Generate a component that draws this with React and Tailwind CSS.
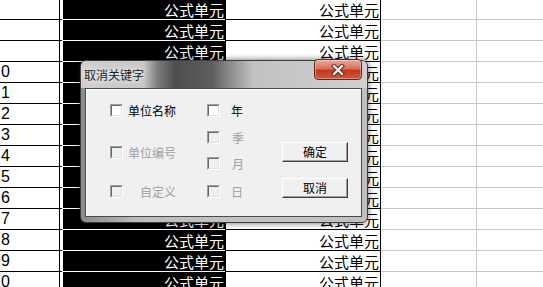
import React from "react";

const ROWS = 14;

function Checkbox({ enabled }) {
  return (
    <span className="inline-block w-[13px] h-[13px] border border-t-[#a0a0a0] border-l-[#a0a0a0] border-b-white border-r-white shrink-0">
      <span
        className={
          "block w-full h-full border border-t-[#696969] border-l-[#696969] border-b-[#e3e3e3] border-r-[#e3e3e3] " +
          (enabled ? "bg-white" : "bg-[#f0f0f0]")
        }
      />
    </span>
  );
}

function Check({ label, enabled, gap = "ml-[5px]", className = "" }) {
  return (
    <div className={"flex items-center h-[13px] " + className}>
      <Checkbox enabled={enabled} />
      <span
        className={
          "text-[12px] leading-none " +
          gap +
          " " +
          (enabled ? "text-black" : "text-[#a0a0a0]")
        }
      >
        {label}
      </span>
    </div>
  );
}

function Button({ children, className = "" }) {
  return (
    <button
      className={
        "w-[66px] h-[20px] bg-[#f0f0f0] border border-t-white border-l-white border-b-[#404040] border-r-[#404040] shadow-[inset_-1px_-1px_0_#a0a0a0] text-[12px] leading-none text-black flex items-center justify-center " +
        className
      }
    >
      {children}
    </button>
  );
}

function Sheet() {
  const rows = Array.from({ length: ROWS }, (_, i) => i);
  return (
    <div className="-mt-px flex flex-col">
      {rows.map((r) => (
        <div key={r} className="flex h-[21px] shrink-0">
          <div className="w-[60px] border-b border-r border-black bg-white pl-px text-[16px] leading-[20px] text-black font-['Liberation_Sans',sans-serif] overflow-hidden">
            {r >= 3 ? (r - 3) % 10 : ""}
          </div>
          <div className="w-[2px] bg-white border-b border-black" />
          <div className="w-[163px] bg-black border-l border-b border-white text-white text-right text-[15px] leading-[21px] pr-px">
            公式单元
          </div>
          <div className="w-[156px] bg-white border-l border-r border-b border-black text-black text-right text-[15px] leading-[21px] pr-[1px]">
            公式单元
          </div>
          <div className="w-[96px] bg-white border-r border-b border-[#c8c8c8]" />
          <div className="flex-1 bg-white border-b border-[#c8c8c8]" />
        </div>
      ))}
    </div>
  );
}

function Dialog() {
  return (
    <div className="absolute left-[80px] top-[60px] w-[288px] h-[163px] rounded-[6px] border border-[#3c3c3c] bg-[linear-gradient(to_right,#8a8a8a_0%,#bdbdbd_20%,#c4c4c4_60%,#c0c0c0_100%)] shadow-[0_0_6px_rgba(0,0,0,0.6)] flex flex-col overflow-visible">
      <div className="relative h-[27px] shrink-0 rounded-t-[5px] bg-[linear-gradient(to_right,#cfcfcf_0%,#c6c6c6_22%,#7a7a7a_27%,#4e4e4e_33%,#5e5e5e_46%,#8a8a8a_52%,#c2c2c2_60%,#d0d0d0_100%)] flex items-center pl-[3px]">
        <span className="text-[12px] leading-none text-[#1e1e1e] [text-shadow:0_0_5px_#f4f4f4,0_0_8px_#f4f4f4]">
          取消关键字
        </span>
        <div className="absolute right-[5px] top-[-2px] w-[48px] h-[21px] rounded-[4px] border border-[#5a2a22] bg-[linear-gradient(to_bottom,#e9a99b_0%,#d8705c_45%,#c0391f_55%,#d5553a_100%)] flex items-center justify-center shadow-[inset_0_0_0_1px_rgba(255,255,255,0.35)]">
          <svg width="14" height="12" viewBox="0 0 14 12">
            <path d="M3 2 L11 10 M11 2 L3 10" stroke="#5a2a22" strokeWidth="4.2" strokeLinecap="square" />
            <path d="M3 2 L11 10 M11 2 L3 10" stroke="#ffffff" strokeWidth="2.2" strokeLinecap="square" />
          </svg>
        </div>
      </div>
      <div className="ml-[4px] mr-[5px] mb-[5px] flex-1 border border-[#4a4a4a] bg-[#f0f0f0] shadow-[inset_1px_1px_0_#ffffff] flex">
        <div className="w-[121px] pl-[24px] pt-[15px] flex flex-col">
          <Check label="单位名称" enabled />
          <Check label="单位编号" className="mt-[29px]" />
          <Check label="自定义" gap="ml-[17px]" className="mt-[26px]" />
        </div>
        <div className="w-[75px] pt-[15px] flex flex-col">
          <Check label="年" enabled gap="ml-[11px]" />
          <Check label="季" gap="ml-[12px]" className="mt-[14px]" />
          <Check label="月" gap="ml-[12px]" className="mt-[13px]" />
          <Check label="日" gap="ml-[11px]" className="mt-[15px]" />
        </div>
        <div className="pt-[53px] flex flex-col">
          <Button>确定</Button>
          <Button className="mt-[16px]">取消</Button>
        </div>
      </div>
    </div>
  );
}

export default function App() {
  return (
    <div className="relative w-[543px] h-[287px] overflow-hidden bg-white font-['Noto_Sans_CJK_SC','Noto_Sans',sans-serif]">
      <Sheet />
      <Dialog />
    </div>
  );
}
